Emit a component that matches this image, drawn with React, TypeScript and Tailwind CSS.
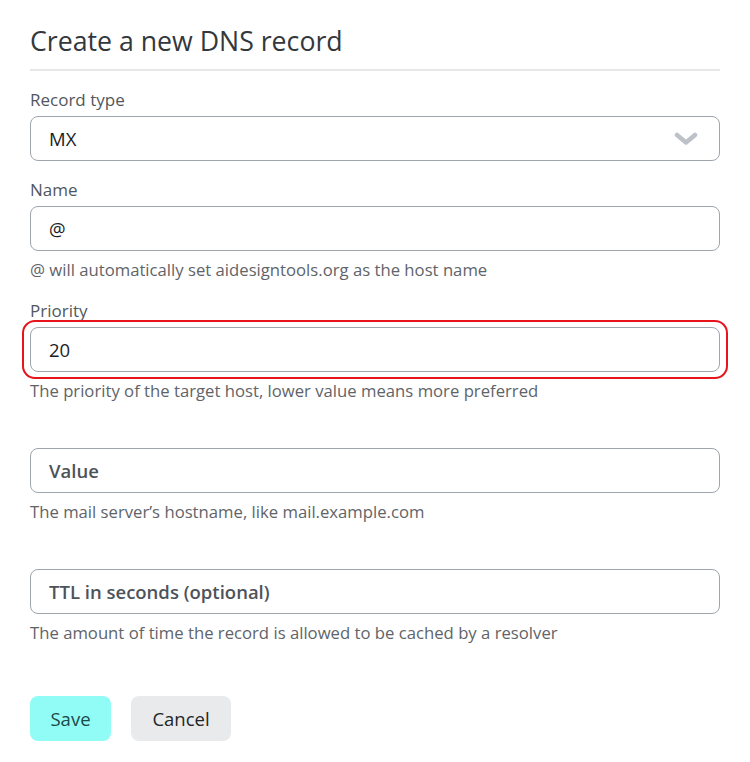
import { ReactNode } from 'react';

const font = { fontFamily: '"Open Sans", "Noto Sans", sans-serif' };

function Field({
  label,
  helper,
  children,
}: {
  label?: string;
  helper?: string;
  children: ReactNode;
}) {
  return (
    <div className="flex flex-col">
      <label className="h-6 text-[17px] leading-6 text-[#52575d]">{label ?? ''}</label>
      <div className="mt-[4px]">{children}</div>
      {helper && <p className="mt-[7px] text-[16.7px] leading-6 text-[#5f6469]">{helper}</p>}
    </div>
  );
}

function TextBox({ value, placeholder }: { value?: string; placeholder?: string }) {
  return (
    <div className="flex h-[45px] items-center rounded-lg border border-[#9ea5ad] bg-white px-[18px] text-[18.5px]">
      {value ? (
        <span className="text-[#1b1d1f]">{value}</span>
      ) : (
        <span className="font-semibold text-[#4d5359]">{placeholder}</span>
      )}
    </div>
  );
}

export default function App() {
  return (
    <div className="min-h-screen w-[750px] bg-white px-[30px]" style={font}>
      <h1 className="mt-[23px] border-b-2 border-[#e6e7e9] pb-[10px] text-[26.7px] leading-[36px] font-medium text-[#33383d]">
        Create a new DNS record
      </h1>

      <div className="mt-[17px] flex flex-col gap-[17px]">
        <Field label="Record type">
          <div className="flex h-[45px] items-center justify-between rounded-lg border border-[#9ea5ad] bg-white pl-[18px] pr-[21px] text-[18.5px] text-[#1b1d1f]">
            <span>MX</span>
            <svg width="24" height="14" viewBox="0 0 24 14" fill="none">
              <path d="M3 3 L12 10.5 L21 3" stroke="#bcc2c8" strokeWidth="4.5" strokeLinecap="round" strokeLinejoin="round" />
            </svg>
          </div>
        </Field>

        <Field label="Name" helper="@ will automatically set aidesigntools.org as the host name">
          <TextBox value="@" />
        </Field>

        <Field label="Priority" helper="The priority of the target host, lower value means more preferred">
          <div className="relative">
            <TextBox value="20" />
            {/* highlight ring drawn over the field */}
            <div className="pointer-events-none absolute -inset-x-[8px] -inset-y-[7px] rounded-[13px] border-2 border-[#e8141b]" />
          </div>
        </Field>

        <Field helper="The mail server’s hostname, like mail.example.com">
          <TextBox placeholder="Value" />
        </Field>

        <Field helper="The amount of time the record is allowed to be cached by a resolver">
          <TextBox placeholder="TTL in seconds (optional)" />
        </Field>
      </div>

      <div className="mt-[51px] flex gap-5">
        <button className="h-[45px] w-[81px] rounded-lg bg-[#91fcf6] text-[18.5px] font-medium text-[#1b4a48]">Save</button>
        <button className="h-[45px] w-[100px] rounded-lg bg-[#e9eaec] text-[18.5px] font-medium text-[#222528]">Cancel</button>
      </div>
    </div>
  );
}
